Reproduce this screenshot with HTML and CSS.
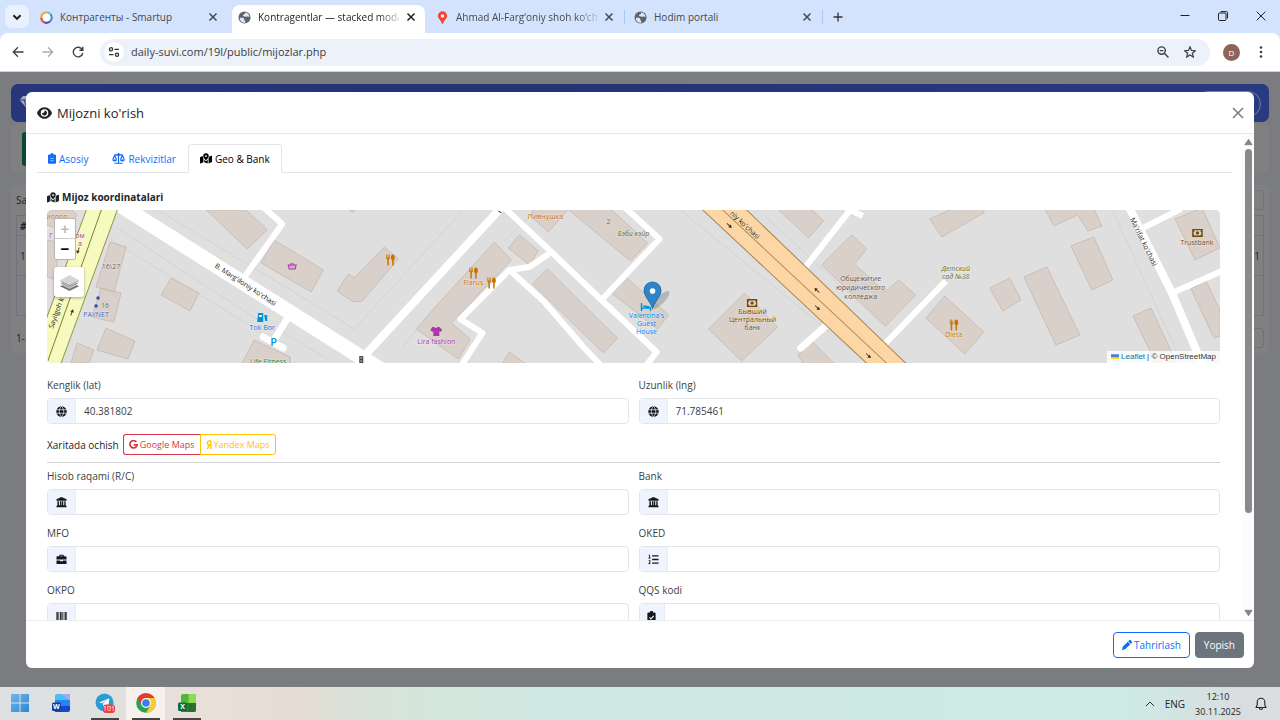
FILE: index.html
```html
<!DOCTYPE html>
<html lang="uz">
<head>
<meta charset="utf-8">
<meta name="viewport" content="width=device-width, initial-scale=1">
<title>Kontragentlar</title>
<link rel="stylesheet" href="styles.css">
</head>
<body>
<svg class="defs" aria-hidden="true">
  <defs>
    <symbol id="close" viewBox="0 0 10 10"><path d="M1.500 1.500l7 7M8.500 1.500l-7 7" stroke="currentColor" fill="none" stroke-width="1.500"/></symbol>
    <symbol id="earth" viewBox="0 0 14 14"><circle cx="7" cy="7" r="6.500" fill="#5f6368"/><path d="M2 7.500C4.500 7 6.500 7.200 6.700 9S8 10.500 8 12.300C5 13.300 1.500 10.800 2 7.500zM7.500 1.500C9.500 1.600 11.800 3 12.400 6c-1 .8-1.500-.6-2.700 0S7.500 5.800 6 5.600 6 3.600 7.200 3.300 7 2 7.500 1.500z" fill="#dde7f8"/></symbol>
    <symbol id="maploc" viewBox="0 0 14 12"><path d="M0 4.500l3.200-1.400C3.300 4.200 3.800 5 4 5.500V10.500L.7 11.900Q0 12 0 11.300zM10 5.500c.3-.5.600-1 .8-1.700L13.300 2.900Q14 2.700 14 3.400V10l-4 1.700zM5 7.200L6.500 9h1L9 7.200v4.500L5 10.500z" fill="currentColor"/><path fill-rule="evenodd" d="M7 0a3.200 3.200 0 0 1 3.200 3.200C10.200 4.800 8 7.300 7 8.300 6 7.300 3.800 4.800 3.800 3.200A3.200 3.200 0 0 1 7 0zM7 2.100a1.100 1.100 0 1 0 0 2.200 1.100 1.100 0 0 0 0-2.200z" fill="currentColor"/></symbol>
    <symbol id="globe" viewBox="0 0 12 12"><circle cx="6" cy="6" r="5.700" fill="currentColor"/><path d="M.3 4.100h11.400M.3 7.900h11.400M6 .3C2.800 3.800 2.800 8.200 6 11.700 9.200 8.200 9.200 3.800 6 .3z" fill="none" stroke="#f0f4ff" stroke-width=".8"/></symbol>
    <symbol id="bank" viewBox="0 0 12 12"><path d="M6 0l5.500 2.500v1.500H.5V2.500zM1.500 4.500h1.700v4.500h1.100V4.500h1.500v4.500h.6V4.500h1.500v4.500H9V4.500h1.500v4.500l1 .8v1.400H.5V9.800l1-.8z" fill="currentColor"/></symbol>
    <symbol id="food" viewBox="0 0 10 12"><path d="M1 .5v3.700Q1 5 2 5.500V11.500h1.500V5.500Q4.500 5 4.500 4.200V.5H3.900V3.500H3.200V.5H2.400V3.500H1.700V.5zM7.500.5C6.200.5 5.600 2 5.600 3.500S6.300 6 6.800 6.200v5.300h1.500V6.200C8.900 6 9.500 5 9.500 3.500S8.800.5 7.500.5z" fill="#c77400"/></symbol>
    <symbol id="cash" viewBox="0 0 12 9"><path d="M.8.800h10.400v7.400H.8z" fill="none" stroke="#734a08" stroke-width="1.500"/><circle cx="6" cy="4.500" r="1.800" fill="#734a08"/><path d="M1 1l2 1.500L1 4zM11 1L9 2.500 11 4zM1 8V5.500L3 7zM11 8V5.500L9 7z" fill="#734a08"/></symbol>
    <symbol id="arrow" viewBox="0 0 10 8"><path d="M0 3.400h5V1.500L9 4 5 6.500V4.500H0z" fill="#39280c"/></symbol>
  </defs>
</svg>

<header class="browser">
  <div class="tabstrip">
    <button class="tab-search" aria-label="Search tabs"><svg viewBox="0 0 10 10"><path d="M2 3.500l3 3 3-3" fill="none" stroke="#222" stroke-width="1.600"/></svg></button>
    <div class="btab">
      <svg class="fav" viewBox="0 0 14 14" fill="none" stroke-width="2.500"><path d="M7 1.500A5.500 5.500 0 0 0 1.500 7" stroke="#f5a623"/><path d="M1.500 7A5.500 5.500 0 0 0 4.500 12" stroke="#e2574c"/><path d="M4.500 12A5.500 5.500 0 0 0 11 10.800" stroke="#6a4bb8"/><path d="M11 10.800A5.500 5.500 0 0 0 11 3.200" stroke="#3e8ede"/><path d="M11 3.200A5.500 5.500 0 0 0 7 1.500" stroke="#7bc67e"/><circle cx="7" cy="7" r="4.200" fill="#fff" stroke="none"/></svg>
      <button class="btitle">Контрагенты - Smartup</button>
      <button class="bclose" aria-label="Close"><svg><use href="#close"/></svg></button>
    </div>
    <div class="btab active">
      <svg class="fav"><use href="#earth"/></svg>
      <button class="btitle fade">Kontragentlar — stacked moda</button>
      <button class="bclose" aria-label="Close"><svg><use href="#close"/></svg></button>
    </div>
    <div class="btab">
      <svg class="fav" viewBox="0 0 14 14"><path d="M7 .3a5 5 0 0 1 5 5c0 3-3.800 4.200-4.300 8.500H6.300C5.800 9.500 2 8.300 2 5.300a5 5 0 0 1 5-5z" fill="#f8412e"/><circle cx="7" cy="5.300" r="1.900" fill="#fff"/></svg>
      <button class="btitle fade">Ahmad Al-Farg‘oniy shoh ko‘ch</button>
      <button class="bclose" aria-label="Close"><svg><use href="#close"/></svg></button>
    </div>
    <div class="btab sep">
      <svg class="fav"><use href="#earth"/></svg>
      <button class="btitle">Hodim portali</button>
      <button class="bclose" aria-label="Close"><svg><use href="#close"/></svg></button>
    </div>
    <button class="newtab sep" aria-label="New tab"><svg viewBox="0 0 10 10"><path d="M5 .5v9M.5 5h9" stroke="#333" stroke-width="1.300"/></svg></button>
    <div class="winctl">
      <button aria-label="Minimize"><svg viewBox="0 0 10 10"><path d="M.5 4.500h9" stroke="#222"/></svg></button>
      <button aria-label="Restore"><svg viewBox="0 0 10 10" fill="none" stroke="#222"><rect x=".5" y="2" width="7.500" height="7.500" rx="1"/><path d="M2.500.600H8.500Q9.500.600 9.500 1.600V7.500"/></svg></button>
      <button aria-label="Close window"><svg viewBox="0 0 10 10"><path d="M.7.700l8.600 8.600M9.300.700L.7 9.300" stroke="#222"/></svg></button>
    </div>
  </div>
  <div class="toolbar">
    <button class="tool" aria-label="Back"><svg viewBox="0 0 12 12" fill="none" stroke="#3c4043" stroke-width="1.300"><path d="M11.500 6H1.500M6 1.300L1.300 6 6 10.700"/></svg></button>
    <button class="tool" aria-label="Forward"><svg viewBox="0 0 12 12" fill="none" stroke="#a9acb0" stroke-width="1.300"><path d="M.5 6h10M6 1.300L10.700 6 6 10.700"/></svg></button>
    <button class="tool" aria-label="Reload"><svg viewBox="0 0 12 12" fill="none" stroke="#3c4043" stroke-width="1.400"><path d="M10.300 3.700A4.800 4.800 0 1 0 10.800 7M10.800.8v3.400H7.400"/></svg></button>
    <div class="omnibox">
      <span class="site"><svg viewBox="0 0 12 12" fill="none" stroke="#333" stroke-width="1.300"><circle cx="3" cy="3.300" r="1.600"/><path d="M6.500 3.300H11M1 8.700h4.500"/><circle cx="9" cy="8.700" r="1.600"/></svg></span>
      <input class="url" aria-label="Address" value="daily-suvi.com/19l/public/mijozlar.php">
      <button class="tool" aria-label="Zoom"><svg viewBox="0 0 12 12" fill="none" stroke="#3c4043" stroke-width="1.400"><circle cx="4.600" cy="4.600" r="3.700"/><path d="M7.300 7.300l4.200 4.200M2.800 4.600h3.600"/></svg></button>
      <button class="tool star" aria-label="Bookmark"><svg viewBox="0 0 12 12" fill="none" stroke="#3c4043" stroke-width="1.200"><path d="M6 .8l1.500 3.600 3.900.3-3 2.500.95 3.900L6 9l-3.350 2.100.95-3.900-3-2.500 3.900-.3z"/></svg></button>
    </div>
    <span class="avatar">D</span>
    <button class="tool dots" aria-label="Menu"><svg viewBox="0 0 12 12" fill="#3c4043"><circle cx="6" cy="1.500" r="1.300"/><circle cx="6" cy="6" r="1.300"/><circle cx="6" cy="10.500" r="1.300"/></svg></button>
  </div>
</header>

<main class="page">
  <div class="behind">
    <div class="navbar">
      <svg class="diamond" viewBox="0 0 16 14"><path d="M4 1h8l3.500 4L8 13.500.5 5z" fill="#a3a9c9"/><path d="M.5 5h15M5 5l3 8 3-8" stroke="#27357c" fill="none"/></svg>
      <span class="pill"></span>
    </div>
    <div class="bcard first"><span class="green"></span></div>
    <div class="bcard second">
      <div class="brow"><span>Sa</span><span class="bbox"></span></div>
      <table class="btable">
        <tr><th>#</th><td></td></tr>
        <tr><td>1</td><td class="r">1</td></tr>
        <tr><td></td><td></td></tr>
      </table>
      <div class="brow"><span>1-</span><span class="bbox"></span></div>
    </div>
  </div>

  <section class="modal" role="dialog" aria-labelledby="mtitle">
    <header class="mhead">
      <svg class="eye" viewBox="0 0 576 512"><path fill="currentColor" d="M288 32c-80.800 0-145.500 36.800-192.600 80.600C48.600 156 17.300 208 2.500 243.700c-3.300 7.900-3.300 16.700 0 24.600C17.300 304 48.600 356 95.400 399.400C142.500 443.200 207.200 480 288 480s145.500-36.800 192.600-80.600c46.800-43.500 78.100-95.400 93-131.100c3.300-7.900 3.300-16.700 0-24.600c-14.900-35.700-46.200-87.700-93-131.100C433.500 68.800 368.800 32 288 32zM144 256a144 144 0 1 1 288 0 144 144 0 1 1 -288 0zm144-64c0 35.300-28.700 64-64 64c-7.100 0-13.900-1.200-20.300-3.300c-5.500-1.800-11.900 1.600-11.700 7.400c.3 6.900 1.300 13.800 3.200 20.700c13.700 51.200 66.400 81.600 117.600 67.900s81.600-66.400 67.900-117.600c-11.100-41.500-47.800-69.400-88.600-71.100c-5.800-.2-9.200 6.100-7.400 11.700c2.100 6.400 3.300 13.200 3.300 20.300z"/></svg>
      <h1 id="mtitle">Mijozni ko'rish</h1>
      <button class="mclose" aria-label="Close"><svg viewBox="0 0 12 12"><path d="M1 1l10 10M11 1L1 11" stroke="#7b7b7b" stroke-width="1.500"/></svg></button>
    </header>

    <div class="mbody">
      <div class="scroll">
        <nav class="tabs">
          <button class="tab"><svg class="clip" viewBox="0 0 9 12"><path d="M1.200 1.500h1.600a1.700 1.700 0 0 1 3.400 0h1.600Q9 1.500 9 2.700v8Q9 12 7.800 12H1.200Q0 12 0 10.700v-8Q0 1.500 1.200 1.500z" fill="currentColor"/><path d="M2.500 6h4M2.500 8.500h4" stroke="#9cc6ff"/></svg>Asosiy</button>
          <button class="tab"><svg class="scales" viewBox="0 0 14 12"><path d="M7 .5V10.500M2.500 2h9M2.500 11.200h9M2.800 2.500L.8 7M2.800 2.500L4.800 7M11.200 2.500L9.200 7M11.200 2.500l2 4.500" fill="none" stroke="currentColor" stroke-width="1.300"/><circle cx="7" cy="1.800" r="1.500" fill="currentColor"/><path d="M0 7h5.600Q5.200 9.300 2.800 9.300T0 7zM8.400 7H14Q13.600 9.300 11.200 9.300T8.400 7z" fill="currentColor"/></svg>Rekvizitlar</button>
          <button class="tab current"><svg class="maploc"><use href="#maploc"/></svg>Geo &amp; Bank</button>
        </nav>

        <div class="pane">
          <h2><svg class="maploc"><use href="#maploc"/></svg>Mijoz koordinatalari</h2>
          <div class="map">
            <svg class="tiles" viewBox="48 210 1172 153" preserveAspectRatio="xMinYMid slice">
              <rect x="48" y="209" width="1172" height="156" fill="#dfdfdf"/>
              <g fill="none" stroke="#d0d0d0" stroke-width=".8">
                <path d="M160 211L283 285M118 228L276 331M112 240L250 325M463 211L355 329 280 283M403 347l15-18M280 330l50 30M682 211L868 363M767 218L900 340M1113 211L1176 350M535 211l-30 30"/>
              </g>
              <g fill="#d9d0c9" stroke="#c8b8ae" stroke-width=".8">
                <path d="M207 210L248 249 268 230 247 210zM275 240L324 270 312 292 262 263zM111 242l16 5-12 45-18-5zM102 288l20 5-7 29-22-5zM172 278l28 15-9 18-29-16zM107 328l29 13-7 18-31-9zM78 343l17 7-5 13H72zM48 240l10 2v38l-10-3zM48 210h25l5 5-8 18-22-8zM255 340l36 17v8H242z"/>
                <path d="M385 247l14 12-36 42-9 1-16-11 11-17 6 4zM495 242l17 18-60 63 19 16-12 20-42-30 18-21zM520 235l19 16-9 14-21-17zM534 209h35l-20 23-18-16zM568 209h43l37 34-17 18zM548 269l70 69-14 15-71-69zM625 276l44 39-11 14-46-36zM745 293l33 34-36 34-33-32zM510 352l18 13h-26zM350 210h6l-3 2z"/>
                <path d="M778 209h33l13 12-15 17zM852 235l15 14-12 15 30 28 14-12 17 15-30 31-64-61zM812 341l24 24h-31l-7-10zM930 219l12 18 42-24v-4h-32zM945 296l39 36-19 22-39-36zM990 288l20-10 11 22-18 11zM1024 277l23-10 33 68-24 10zM1071 246l23-9 19 43-21 10zM1045 209l9 17 24-11 10 16 14-5-8-17zM1175 219l27-11 18 40-25 12zM1191 289l15-8 14 29v26l-6 2zM1133 316l18-8 24 51v6h-18z"/>
              </g>
              <g fill="none" stroke="#fff" stroke-linejoin="round">
                <path d="M100 192L390 375" stroke-width="15"/>
                <path d="M364 357L508 201M1128 205L1172 293 1203 366" stroke-width="8"/>
                <path d="M504 207L552 252 602 300 657 352 647 365M552 252L530 267 510 270 461 319 483 333 461 367M510 270L545 302 583 346 602 366M602 300L660 239 626 208M265 208L283 224 246 276M852 208L805 268M946 281L884 345M1141 229l40-20M1172 293l50-22M843 206l20 10" stroke-width="6"/>
                <path d="M289 317L276 338M264 337L284 348M827 325L801 348" stroke-width="7" stroke-linecap="round"/>
              </g>
              <path d="M88 208h31L61 366H30z" fill="#f7fabf" stroke="#8f9a4a"/>
              <path d="M103 208L47 366" stroke="#7d8730" fill="none"/>
              <path d="M701 208h44L909 366h-39z" fill="#fcd6a4" stroke="#a88450"/>
              <path d="M721 208L890 366" stroke="#b58f55" fill="none"/>
              <g>
                <use href="#arrow" x="-4" y="-3" width="8" height="6" transform="translate(730 226) rotate(43)"/>
                <use href="#arrow" x="-4" y="-3" width="8" height="6" transform="translate(817 290) rotate(223)"/>
                <use href="#arrow" x="-4" y="-3" width="8" height="6" transform="translate(818 308) rotate(43)"/>
                <use href="#arrow" x="-4" y="-3" width="8" height="6" transform="translate(869 356) rotate(43)"/>
                <use href="#arrow" x="-4" y="-3" width="8" height="6" transform="translate(79 251) rotate(110)"/>
                <use href="#arrow" x="-4" y="-3" width="8" height="6" transform="translate(73 312) rotate(-70)"/>
              </g>
              <g class="road-name">
                <text transform="translate(215 267) rotate(33)">B. Marg'iloniy ko'chasi</text>
                <text transform="translate(54 329) rotate(-70)">Sayilgoh k</text>
                <text transform="translate(730 214) rotate(43)">niy ko'chasi</text>
                <text transform="translate(1130 219) rotate(64)">Ma'rifat ko'chasi</text>
              </g>
              <g class="poi">
                <g fill="#c77400"><text x="58" y="219">иопоп</text><text x="546" y="219">Пивнушка</text><text x="474" y="285">Flarus</text><text x="954" y="337">Dieta</text></g>
                <g fill="#ac39ac"><text x="52" y="238">Г</text><text x="81" y="238">ом</text><text x="81" y="246">а</text><text x="437" y="344">Lira fashion</text></g>
                <g fill="#666"><text x="112" y="269">16\27</text><text x="106" y="308">16</text><text x="609" y="224">2</text></g>
                <text x="97" y="317" fill="#4863b0">PAYNET</text>
                <g fill="#0a7ad6"><text x="263" y="330">Tok Bor</text></g>
                <text x="269" y="364" fill="#198a35">Life Fitness</text>
                <g fill="#0080ff"><text x="647" y="318">Valentina's</text><text x="647" y="326">Guest</text><text x="647" y="334">House</text></g>
                <g fill="#6b6a1c" font-style="italic"><text x="634" y="236">Бэби кэйр</text><text x="956" y="271">Детский</text><text x="956" y="279">сад №38</text></g>
                <g fill="#734a08"><text x="753" y="314">Бывший</text><text x="753" y="322">Центральный</text><text x="753" y="330">банк</text><text x="1197" y="245">Trustbank</text></g>
                <g fill="#555"><text x="861" y="281">Общежитие</text><text x="861" y="290">юридического</text><text x="861" y="299">колледжа</text></g>
              </g>
              <use href="#food" x="386" y="254" width="10" height="12"/><use href="#food" x="469" y="267" width="10" height="12"/><use href="#food" x="487" y="277" width="10" height="12"/><use href="#food" x="949" y="319" width="10" height="12"/>
              <use href="#cash" x="747" y="299" width="11" height="8"/><use href="#cash" x="1192" y="229" width="11" height="8"/>
              <path d="M433 327h2q1.500 2 3 0h2l3 3-2 2-1-1v5h-6v-5l-1 1-2-2z" fill="#ac39ac"/>
              <path d="M289 265h8l-1 4h-6zM291 265l1.500-2M295 265l-1.500-2" fill="#d9a6d9" stroke="#ac39ac"/>
              <path d="M259 313h5v9h-6zM265 315l3 0v6h-2zM260 314h3v3h-3z" fill="#0092da"/><path d="M260 315h2.500v2H260z" fill="#fff"/>
              <text x="271" y="346" class="park">P</text>
              <circle cx="99" cy="298" r="1.800" fill="#334fa8"/><circle cx="97" cy="306" r="1.800" fill="#334fa8"/>
              <path d="M360 356h4v7h-4z" fill="#444"/><path d="M361 358h2M361 361h2" stroke="#ddd"/><path d="M499 211l3 2" stroke="#333"/>
              <path d="M642 303v8M642 308h9v3M644 306l6 1" stroke="#0092da" stroke-width="1.500" fill="none"/>
              <ellipse cx="661" cy="300" rx="12" ry="4" transform="rotate(-45 661 300)" fill="#777" opacity=".4"/>
              <path d="M653 308C650 300 644.500 296 644.500 290.500a8.500 8.500 0 0 1 17 0C661.500 296 656 300 653 308z" fill="#2e84cb" stroke="#2570ad"/>
              <circle cx="653" cy="291" r="2.800" fill="#fff"/>
            </svg>
            <div class="controls">
              <div class="zoom"><button class="off" aria-label="Zoom in">+</button><button aria-label="Zoom out">−</button></div>
              <button class="layers" aria-label="Layers"><svg viewBox="0 0 20 20"><path d="M0 14l10-5 10 5-10 5z" fill="#777"/><path d="M0 11l10-5 10 5-10 5z" fill="#8c8c8c" stroke="#fff" stroke-width=".8"/><path d="M0 7.500v1.500l10 5 10-5V7.500l-10 4z" fill="#999" stroke="#fff" stroke-width=".5"/><path d="M0 7.500L10 2l10 5.500-10 5z" fill="#d6d6d6"/></svg></button>
            </div>
            <div class="attrib"><svg viewBox="0 0 12 8"><path fill="#4c7be1" d="M0 0h12v4H0z"/><path fill="#ffd500" d="M0 4h12v3H0z"/></svg> <a href="#">Leaflet</a> | © OpenStreetMap</div>
          </div>

          <div class="grid geo">
            <div class="field"><label for="lat">Kenglik (lat)</label><div class="group"><span class="addon"><svg><use href="#globe"/></svg></span><input id="lat" value="40.381802" readonly></div></div>
            <div class="field"><label for="lng">Uzunlik (lng)</label><div class="group"><span class="addon"><svg><use href="#globe"/></svg></span><input id="lng" value="71.785461" readonly></div></div>
          </div>

          <div class="open">
            <span>Xaritada ochish</span>
            <div class="links">
              <a class="google" href="#"><svg viewBox="0 0 10 10"><path d="M8.200 2.300A4 4 0 1 0 9 5.300H5.200" fill="none" stroke="currentColor" stroke-width="1.900"/></svg>Google Maps</a><a class="yandex" href="#"><svg class="ya" viewBox="0 0 6 10"><path d="M5 10V1H3.500Q1.300 1 1.300 3.300T3.500 5.500H5M3.500 5.500L1 10" fill="none" stroke="currentColor" stroke-width="1.500"/></svg>Yandex Maps</a>
            </div>
          </div>
          <hr>

          <div class="grid">
            <div class="field"><label for="rc">Hisob raqami (R/C)</label><div class="group"><span class="addon"><svg><use href="#bank"/></svg></span><input id="rc" readonly></div></div>
            <div class="field"><label for="bk">Bank</label><div class="group"><span class="addon"><svg><use href="#bank"/></svg></span><input id="bk" readonly></div></div>
            <div class="field"><label for="mfo">MFO</label><div class="group"><span class="addon"><svg viewBox="0 0 12 12"><path d="M3.500 2.500V1.600Q3.500.8 4.300.8h3.400q.8 0 .8.800v.9h2q1 0 1 1V6H.5V3.500q0-1 1-1zM4.600 2.500h2.800V1.900H4.600zM.5 7h4v1h3V7h4v3q0 1-1 1h-9q-1 0-1-1z" fill="currentColor" fill-rule="evenodd"/></svg></span><input id="mfo" readonly></div></div>
            <div class="field"><label for="oked">OKED</label><div class="group"><span class="addon"><svg viewBox="0 0 12 12" fill="none" stroke="currentColor"><path d="M4.500 2h7M4.500 6h7M4.500 10h7" stroke-width="1.500"/><path d="M.8 1.200h.9v3.300M.5 4.500h2.300M.7 7.300h1.600v1.200L.8 10.500h2" stroke-width="1"/></svg></span><input id="oked" readonly></div></div>
            <div class="field"><label for="okpo">OKPO</label><div class="group"><span class="addon"><svg viewBox="0 0 12 12"><path d="M.5 1h1.500v10H.5zM2.700 1h.8v10h-.8zM4.500 1h1.600v10H4.500zM7 1h.8v10H7zM8.500 1h.7v10h-.7zM10 1h1.600v10H10z" fill="currentColor"/></svg></span><input id="okpo" readonly></div></div>
            <div class="field"><label for="qqs">QQS kodi</label><div class="group"><span class="addon slim"><svg viewBox="0 0 9 12"><path d="M1.200 1.500h1.600a1.700 1.700 0 0 1 3.400 0h1.600Q9 1.500 9 2.700v8Q9 12 7.800 12H1.200Q0 12 0 10.700v-8Q0 1.500 1.200 1.500z" fill="currentColor"/><path d="M2.300 7l1.600 1.600L6.900 5.300" fill="none" stroke="#f0f4ff" stroke-width="1.200"/></svg></span><input id="qqs" readonly></div></div>
          </div>
        </div>
      </div>
      <div class="sbar" aria-hidden="true">
        <svg viewBox="0 0 10 8"><path d="M5 1l4 6H1z" fill="#858585" stroke="#858585" stroke-linejoin="round"/></svg>
        <span class="thumb"></span>
        <svg viewBox="0 0 10 8"><path d="M5 7l4-6H1z" fill="#858585" stroke="#858585" stroke-linejoin="round"/></svg>
      </div>
    </div>

    <footer class="mfoot">
      <button class="btn edit"><svg viewBox="0 0 512 512"><path fill="currentColor" d="M410.300 231l11.300-11.300-33.900-33.900-62.100-62.100L291.700 89.800l-11.300 11.300-22.600 22.600L58.600 322.900c-10.400 10.400-18 23.300-22.200 37.400L1 480.700c-2.500 8.400-.2 17.500 6.100 23.700s15.300 8.500 23.700 6.100l120.300-35.400c14.100-4.200 27-11.800 37.400-22.200L387.700 253.700zM362.700 18.700L348.300 33.200 325.700 55.800 314.300 67.100l33.900 33.900 62.100 62.100 33.900 33.900 11.300-11.300 22.600-22.600 14.500-14.500c25-25 25-65.500 0-90.500L453.300 18.700c-25-25-65.500-25-90.500 0z"/></svg>Tahrirlash</button>
      <button class="btn shut">Yopish</button>
    </footer>
  </section>
</main>

<footer class="taskbar">
  <div class="apps">
    <button class="app" aria-label="Start"><svg viewBox="0 0 20 20"><defs><linearGradient id="w" x2="1" y2="1"><stop stop-color="#6fb8ea"/><stop offset="1" stop-color="#2f86d3"/></linearGradient></defs><path d="M1 1h8.500v8.500H1zM10.500 1H19v8.500h-8.500zM1 10.500h8.500V19H1zM10.500 10.500H19V19h-8.500z" fill="url(#w)"/></svg></button>
    <button class="app" aria-label="Word"><svg viewBox="0 0 20 20"><path d="M6 1h12q1 0 1 1v5H4V3q0-2 2-2z" fill="#41c3f6"/><path d="M10 1h8q1 0 1 1v5z" fill="#a9a6fa"/><path d="M4 7h15v6H4z" fill="#2a84ef"/><path d="M4 13h15v4q0 2-2 2H4z" fill="#1548ce"/><rect x="1" y="9.500" width="9" height="8.500" rx="1.500" fill="#123f9f"/><text x="5.500" y="16.300" class="glyph">W</text></svg></button>
  </div>
  <div class="apps">
    <button class="app open-app" aria-label="Telegram"><svg viewBox="0 0 20 20"><circle cx="9.500" cy="9.500" r="9" fill="#2a9cd4"/><path d="M4 9.500l10.500-4.300L13 14l-3.300-2.300-1.500 1.500-.3-2.600L12 7 6.800 10.300z" fill="#fff"/><rect x="8" y="11.500" width="12" height="8.500" rx="3" fill="#ee3b3b"/><text x="14" y="18.300" class="glyph count">101</text></svg></button>
    <button class="app open-app front" aria-label="Chrome"><svg viewBox="0 0 20 20"><circle cx="10" cy="10" r="9.800" fill="#2ba24c"/><path d="M1.500 5.100A9.800 9.800 0 0 1 18.500 5.100H10L6 12.500z" fill="#e33b2e"/><path d="M18.500 5.100A9.800 9.800 0 0 1 10 19.800L14.300 12.500 10 5.100z" fill="#fcc934"/><circle cx="10" cy="10" r="4.900" fill="#fff"/><circle cx="10" cy="10" r="3.800" fill="#3b7df0"/></svg></button>
    <button class="app open-app" aria-label="Excel"><svg viewBox="0 0 20 20"><path d="M6 1h12q1 0 1 1v8H4V3q0-2 2-2z" fill="#4fb83c"/><path d="M11.500 1H18q1 0 1 1v8h-7.500z" fill="#8bdb55"/><path d="M4 10h15v7q0 2-2 2H4z" fill="#1d8a3a"/><path d="M11.500 10H19v7q0 2-2 2h-5.500z" fill="#27702a"/><rect x="1" y="9.500" width="9" height="8.500" rx="1.500" fill="#0f6a3c"/><text x="5.500" y="16.300" class="glyph">X</text></svg></button>
  </div>
  <div class="tray">
    <svg class="chev" viewBox="0 0 10 10"><path d="M1 7l4-4 4 4" fill="none" stroke="#333"/></svg>
    <span class="lang">ENG</span>
    <span class="clock"><time>12:10</time><time>30.11.2025</time></span>
    <svg class="bell" viewBox="0 0 12 14"><path d="M1 10.500h10L9.800 8V5a3.800 3.800 0 0 0-7.600 0v3zM4.500 11a1.500 1.500 0 0 0 3 0" fill="none" stroke="#222" stroke-width="1.100" stroke-linejoin="round"/></svg>
  </div>
</footer>
</body>
</html>
```
FILE: styles.css
```css
* { box-sizing: border-box; }
body { margin: 0; height: 100vh; display: flex; flex-direction: column; overflow: hidden; font: 10px/16px "Open Sans", "Noto Sans", sans-serif; color: #212529; }
button, input { font: inherit; color: inherit; border: 0; background: none; padding: 0; margin: 0; outline: 0; }
svg { display: block; flex: none; }
.defs { position: absolute; width: 0; height: 0; }

/* Browser window */
.browser { background: #d3e3fd; }
.tabstrip { display: flex; align-items: stretch; height: 33px; padding-top: 5px; }
.tab-search { width: 24px; height: 23px; margin: 0 5px; border-radius: 7px; background: #e9f1fe; display: grid; place-items: center; }
.tab-search svg { width: 12px; height: 12px; }
.btab { position: relative; display: flex; align-items: center; gap: 7px; width: 193px; margin-right: 5px; padding: 0 9px 4px 6px; color: #45494e; }
.btab.active { background: #fff; border-radius: 8px 8px 0 0; color: #1f1f1f; }
.fav { width: 13px; height: 13px; }
.btitle { flex: 1; min-width: 0; overflow: hidden; white-space: nowrap; text-align: left; }
.btitle.fade { mask-image: linear-gradient(90deg, #000 85%, #0003); }
.bclose svg { width: 10px; height: 10px; }
.sep::before { content: ""; position: absolute; left: -4px; top: 5px; width: 1px; height: 14px; background: #a8c7fa; }
.newtab { position: relative; width: 24px; padding-bottom: 4px; display: grid; place-items: center; }
.newtab svg { width: 10px; height: 10px; }
.winctl { display: flex; gap: 28px; margin-left: auto; padding: 0 14px 6px 0; align-items: center; }
.winctl svg { width: 10px; height: 10px; }
.toolbar { display: flex; align-items: center; height: 39px; padding: 0 13px 0 12px; background: #fff; border-radius: 8px 8px 0 0; border-bottom: 1px solid #d0d3d8; }
.toolbar > .tool { margin-right: 18px; }
.toolbar > .tool.dots { margin: 0 0 0 15px; }
.tool svg { width: 12px; height: 12px; }
.omnibox { flex: 1; display: flex; align-items: center; height: 27px; margin: 0 13px 0 -2px; padding: 0 14px 0 4px; border-radius: 14px; background: #ecf1fa; }
.site { display: grid; place-items: center; width: 20px; height: 20px; border-radius: 50%; background: #fff; margin-right: 7px; }
.site svg { width: 12px; height: 12px; }
.url { flex: 1; min-width: 0; color: #3a3d41; font-size: 11px; }
.omnibox .star { margin-left: 15px; }
.avatar { width: 17px; height: 17px; border-radius: 50%; background: #8d6558; color: #fff; font-size: 8px; line-height: 17px; text-align: center; }

/* Dimmed page under the dialog */
.page { position: relative; flex: 1; min-height: 0; background: #7b7c7f; overflow: hidden; }
.behind { padding: 12px 11px; color: #222429; }
.navbar { display: flex; justify-content: space-between; height: 38px; padding: 7px 8px; border-radius: 7px; background: linear-gradient(90deg, #27357c, #243374 40%, #2a3a80); }
.diamond { width: 16px; height: 14px; margin-top: 4px; }
.pill { width: 66px; height: 26px; border: 1px solid #7080b0; border-radius: 13px; }
.bcard { background: #808083; border-radius: 6px; }
.bcard.first { height: 48px; margin-top: 2px; padding: 8px 11px; }
.green { display: block; width: 60px; height: 34px; border-radius: 3px; background: #0c4a30; }
.bcard.second { margin-top: 13px; padding: 5px; height: 168px; }
.brow { display: flex; justify-content: space-between; align-items: center; height: 20px; }
.bbox { width: 80px; height: 20px; border: 1px solid #707176; border-radius: 3px; }
.btable { width: 100%; margin: 5px 0 12px; border-collapse: collapse; }
.btable td, .btable th { border: 1px solid #6f717c; padding: 0 3px; height: 20px; text-align: left; font-style: italic; }
.btable td { height: 40px; font-style: normal; }
.btable tr:first-child td { height: 20px; }
.btable .r { text-align: right; }

/* Dialog */
.modal { position: absolute; inset: 20px 26px 19px; display: flex; flex-direction: column; background: #fff; border-radius: 6px; overflow: hidden; }
.mhead { display: flex; align-items: center; gap: 5px; height: 42px; padding: 0 10px 0 11px; border-bottom: 1px solid #e6e8ea; }
.eye { width: 15px; height: 14px; }
h1 { margin: 0; font-size: 13px; font-weight: 500; }
.mclose { margin-left: auto; }
.mclose svg { width: 12px; height: 12px; }
.mbody { flex: 1; min-height: 0; display: flex; }
.scroll { flex: 1; min-width: 0; overflow-y: auto; scrollbar-width: none; padding: 10px 10px 60px 11px; }
.tabs { display: flex; height: 29px; border-bottom: 1px solid #e3e6e9; }
.tab { display: flex; align-items: center; gap: 3px; height: 29px; padding: 0 11px; border: 1px solid transparent; border-radius: 4px 4px 0 0; color: #0d6efd; white-space: nowrap; }
.tab:first-child { padding-left: 10px; }
.tab.current { color: #000; border-color: #e3e6e9 #e3e6e9 #fff; background: #fff; }
.clip { width: 8px; height: 11px; }
.scales { width: 13px; height: 11px; }
.maploc { width: 12px; height: 11px; }
.pane { padding: 16px 12px 0 10px; }
h2 { display: flex; align-items: center; gap: 3px; height: 16px; margin: 0 0 5px; font-size: 10px; font-weight: 700; }
.map { position: relative; height: 153px; border-radius: 5px; overflow: hidden; background: #dfdfdf; }
.tiles { width: 100%; height: 100%; }
.controls { position: absolute; left: 7px; top: 8px; display: flex; flex-direction: column; gap: 7px; }
.zoom { width: 22px; border: 1px solid #b7b7b2; border-radius: 2px; background: #fff; }
.zoom button { display: block; width: 20px; height: 20px; font: bold 15px/20px "Liberation Sans", sans-serif; color: #000; }
.zoom .off { color: #bbb; border-bottom: 1px solid #ccc; }
.layers { width: 30px; height: 30px; border-radius: 3px; background: #fff; box-shadow: 0 1px 3px #0005; display: grid; place-items: center; }
.layers svg { width: 19px; height: 19px; }
.attrib { position: absolute; right: 0; bottom: 0; display: flex; align-items: center; gap: 2px; padding: 0 4px; background: #fffc; font: 8px/12px "Liberation Sans", sans-serif; color: #333; }
.attrib a { color: #0078a8; text-decoration: none; }
.attrib svg { width: 8px; height: 6px; }
.road-name { font-size: 7px; fill: #222; }
.poi { font-size: 7px; text-anchor: middle; paint-order: stroke; stroke: #ffffff66; stroke-width: 1px; }
.park { font-size: 11px; font-weight: 600; fill: #0092da; }

.grid { display: grid; grid-template-columns: 1fr 1fr; column-gap: 10px; row-gap: 10px; }
.grid.geo { margin-top: 14px; }
.field label { display: block; height: 17px; margin-bottom: 4px; color: #3a3f44; }
.group { display: flex; height: 26px; border: 1px solid #e2e6ea; border-radius: 4px; overflow: hidden; }
.addon { display: grid; place-items: center; width: 27px; background: #f0f4ff; color: #15181b; }
.addon.slim { width: 24px; }
.addon svg { width: 11px; height: 11px; }
.group input { flex: 1; min-width: 0; padding: 0 8px; border-left: 1px solid #e8ecf2; color: #3a3f44; }
.open { display: flex; align-items: center; gap: 4px; height: 21px; margin-top: 10px; }
.links { display: flex; font-size: 9px; line-height: 19px; }
.links a { display: flex; align-items: center; gap: 2px; padding: 0 5px; border: 1px solid; text-decoration: none; }
.links svg { width: 9px; height: 9px; }
.links .ya { width: 6px; }
.google { color: #dc3545; border-radius: 3px 0 0 3px; border-right: 0 !important; }
.yandex { color: #ffc107; border-radius: 0 3px 3px 0; }
hr { margin: 7px 0 5px; border: 0; border-top: 1px solid #cfd1d3; }
.sbar { width: 12px; display: flex; flex-direction: column; align-items: center; padding: 4px 0 3px; background: #fcfcfc; }
.sbar svg { width: 9px; height: 8px; }
.thumb { width: 7px; height: 76%; margin: 3px 0 auto; border-radius: 4px; background: #8a8a8a; }
.mfoot { display: flex; justify-content: flex-end; align-items: center; gap: 5px; height: 48px; padding: 0 10px; border-top: 1px solid #e9ebed; }
.btn { display: flex; align-items: center; gap: 2px; height: 26px; padding: 0 8px; border: 1px solid; border-radius: 4px; }
.edit { color: #0d6efd; }
.edit svg { width: 10px; height: 10px; }
.shut { background: #6c757d; border-color: #6c757d; color: #fff; }

/* Taskbar */
.taskbar { display: flex; gap: 5px; height: 33px; background: linear-gradient(90deg, #dde1e4, #dfe0de 8%, #eadfd9 16%, #e6dcd5 23%, #d9e3d8 28%, #cfe9e2 42%, #cdeae4 88%, #dadde0 97%, #dcdde0); }
.apps { display: flex; gap: 2px; }
.app { display: grid; place-items: center; width: 39px; border-bottom: 2px solid transparent; }
.app svg { width: 20px; height: 20px; }
.app.open-app { border-image: linear-gradient(90deg, transparent 18%, #444 18%, #444 84%, transparent 84%) 2; }
.app.front { background: #f7f1ee; }
.glyph { font: bold 7px "Open Sans", sans-serif; fill: #fff; text-anchor: middle; }
.glyph.count { font-weight: 400; }
.tray { display: flex; align-items: center; margin-left: auto; padding-right: 13px; color: #222; }
.chev { width: 10px; height: 10px; margin-right: 10px; }
.lang { margin-right: 10px; }
.clock { display: flex; flex-direction: column; align-items: center; font-size: 9px; line-height: 15px; margin-right: 14px; }
.bell { width: 12px; height: 14px; }
```
